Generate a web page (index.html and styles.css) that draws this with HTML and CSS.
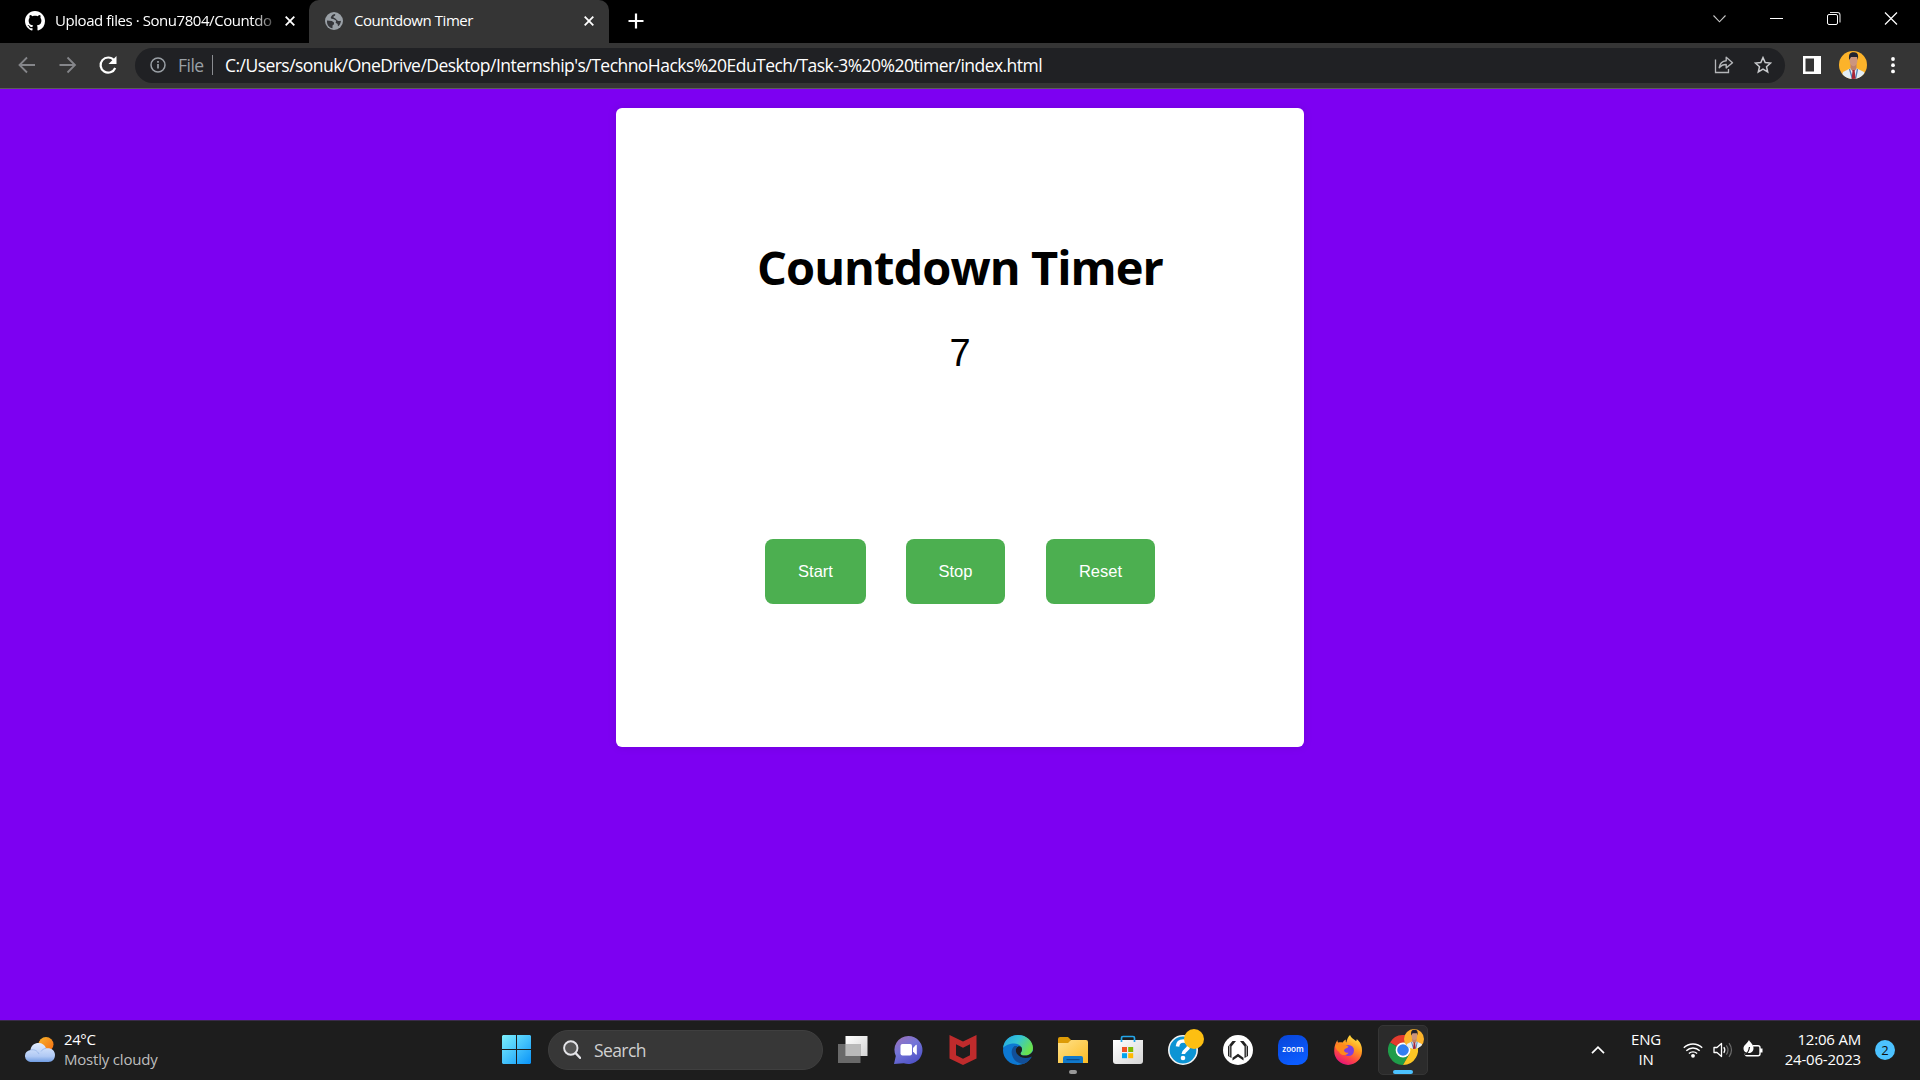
FILE: index.html
```html
<!DOCTYPE html>
<html lang="en">
<head>
<meta charset="utf-8">
<title>Countdown Timer</title>
<link rel="stylesheet" href="styles.css">
</head>
<body>
<svg class="defs" width="0" height="0">
  <defs>
    <linearGradient id="win" x1="0" y1="0" x2="1" y2="1"><stop offset="0" stop-color="#7cf0fd"/><stop offset=".5" stop-color="#45c3fb"/><stop offset="1" stop-color="#0993f8"/></linearGradient>
    <linearGradient id="cloud" x1="0" y1="0" x2="0" y2="1"><stop offset="0" stop-color="#e2edff"/><stop offset=".7" stop-color="#b0c9f4"/><stop offset="1" stop-color="#6f9ce2"/></linearGradient>
    <linearGradient id="sun" x1="0" y1="0" x2="1" y2="1"><stop offset="0" stop-color="#f8b52b"/><stop offset="1" stop-color="#f46a10"/></linearGradient>
    <linearGradient id="chat" x1="0" y1="0" x2=".6" y2="1"><stop offset="0" stop-color="#a070b5"/><stop offset=".5" stop-color="#7475d8"/><stop offset="1" stop-color="#5154c8"/></linearGradient>
    <linearGradient id="edgeTop" x1="0" y1="0" x2="1" y2=".5"><stop offset="0" stop-color="#22a4e4"/><stop offset=".5" stop-color="#35c5d4"/><stop offset="1" stop-color="#6ae24c"/></linearGradient>
    <linearGradient id="folder" x1="0" y1="0" x2="1" y2="1"><stop offset="0" stop-color="#ffe18a"/><stop offset="1" stop-color="#fcbc24"/></linearGradient>
    <linearGradient id="zoomBg" x1="0" y1="0" x2=".4" y2="1"><stop offset="0" stop-color="#0845d8"/><stop offset="1" stop-color="#0b5cff"/></linearGradient>
    <linearGradient id="fox" x1=".8" y1="0" x2=".3" y2="1"><stop offset="0" stop-color="#fff04a"/><stop offset=".4" stop-color="#ff9a1f"/><stop offset=".7" stop-color="#ff4a42"/><stop offset="1" stop-color="#e4107c"/></linearGradient>
    <linearGradient id="paper" x1="0" y1="0" x2="1" y2="1"><stop offset="0" stop-color="#fff"/><stop offset="1" stop-color="#d5d5d5"/></linearGradient>
    <clipPath id="round"><circle cx="14" cy="14" r="14"/></clipPath>
    <symbol id="portrait" viewBox="0 0 28 28">
      <g clip-path="url(#round)">
        <path d="M0 0h28v28H0z" fill="#fcb32a"/>
        <path d="M2 28l2-7 8-4h5l8 4 3 7z" fill="#e3edf5"/>
        <path d="M11.500 13h6v5l-3 3-3-3z" fill="#bb816c"/>
        <ellipse cx="14.500" cy="9.500" rx="3.900" ry="5.800" fill="#cb957f"/>
        <path d="M10.200 9C9.300 3 11 1 15 1.200c4 0 4.600 3 3.900 7.800L18 6h-6z" fill="#202331"/>
        <path d="M10.500 18l3 10M18.500 18L16.500 28" stroke="#4f82b8" stroke-width="1.300"/>
        <path d="M13.600 19h2l1 9h-4z" fill="#a72537"/>
      </g>
    </symbol>
  </defs>
</svg>
<div class="desktop">
  <header class="tabstrip">
    <div class="tab">
      <svg class="favicon" width="20" height="20" viewBox="0 0 16 16"><path fill="#fff" d="M8 0C3.580 0 0 3.580 0 8c0 3.540 2.290 6.530 5.470 7.590.4.070.55-.17.55-.38 0-.19-.01-.82-.01-1.490-2.010.37-2.530-.49-2.690-.94-.09-.23-.48-.94-.82-1.130-.28-.15-.68-.52-.01-.53.630-.01 1.080.58 1.230.82.720 1.210 1.870.87 2.330.66.070-.52.28-.87.510-1.070-1.780-.2-3.640-.89-3.640-3.950 0-.87.310-1.590.82-2.150-.08-.2-.36-1.020.08-2.120 0 0 .67-.21 2.200.82.640-.18 1.320-.27 2-.27s1.360.09 2 .27c1.530-1.040 2.200-.82 2.200-.82.440 1.100.16 1.920.08 2.120.510.560.82 1.270.82 2.150 0 3.070-1.870 3.750-3.650 3.950.290.250.540.730.540 1.480 0 1.070-.01 1.930-.01 2.200 0 .210.150.460.550.380A8.010 8.010 0 0 0 16 8c0-4.420-3.580-8-8-8z"/></svg>
      <span class="tab-title fade">Upload files · Sonu7804/Countdo</span>
      <svg width="10" height="10" viewBox="0 0 10 10"><path d="M.7.7l8.600 8.600M9.300.7L.7 9.300" stroke="#fff" stroke-width="1.800"/></svg>
    </div>
    <div class="tab active">
      <svg class="favicon" width="18" height="18" viewBox="0 0 18 18"><circle cx="9" cy="9" r="9" fill="#9aa0a6"/><path d="M2 8.500l4.800.6 2.200 1.300v1.800l-1.500 1.300v2.800C4 15.600 2 13 2 9.800zM10 2c.6.900.2 1.700-.8 2-1.300.4-.8 1.800.3 2.100 1.300.5 1.700 1.600 2.900 2.400 1.100.7 2.600.6 3.600.2-.2 2.700-1.600 4.600-3 5.500l-.4-2.200-2-1.300.6-2-2.300-1.500-2.900-.8C5.300 4.800 7.500 2.300 10 2z" fill="#35363a"/></svg>
      <span class="tab-title">Countdown Timer</span>
      <svg width="10" height="10" viewBox="0 0 10 10"><path d="M.7.7l8.600 8.600M9.300.7L.7 9.300" stroke="#fff" stroke-width="1.800"/></svg>
    </div>
    <svg class="newtab" width="16" height="16" viewBox="0 0 16 16"><path d="M8 .5v15M.5 8h15" stroke="#fff" stroke-width="2.200"/></svg>
    <div class="window-controls">
      <svg width="57" height="38" viewBox="0 0 57 38"><path d="M22.500 15.500l6 6.300 6-6.300" fill="none" stroke="#c8c8c8" stroke-width="1.100"/></svg>
      <svg width="57" height="38" viewBox="0 0 57 38"><path d="M22 18.500h13" stroke="#fff"/></svg>
      <svg width="57" height="38" viewBox="0 0 57 38"><rect x="22.500" y="14.500" width="10" height="10" rx="1.500" fill="none" stroke="#fff"/><path d="M25 12.500h7.500q2.500 0 2.500 2.500v7.500" fill="none" stroke="#ddd" stroke-width="1.100"/></svg>
      <svg width="57" height="38" viewBox="0 0 57 38"><path d="M23 12.500l12 12M35 12.500l-12 12" stroke="#fff" stroke-width="1.200"/></svg>
    </div>
  </header>

  <nav class="toolbar">
    <svg width="40" height="24" viewBox="0 0 40 24"><path d="M35 12H20.500M27 4.500L19.500 12l7.500 7.500" fill="none" stroke="#85868a" stroke-width="1.800"/></svg>
    <svg width="40" height="24" viewBox="0 0 40 24"><path d="M19.500 12h15M27.500 4.500L35 12l-7.500 7.500" fill="none" stroke="#85868a" stroke-width="1.800"/></svg>
    <svg width="40" height="24" viewBox="0 0 40 24"><path d="M34 7.200A7.600 7.600 0 1 0 35.200 15" fill="none" stroke="#fff" stroke-width="2.200"/><path d="M36.500 3v8h-8z" fill="#fff"/></svg>
    <div class="omnibox">
      <svg width="16" height="16" viewBox="0 0 16 16"><circle cx="8" cy="8" r="7" fill="none" stroke="#9aa0a6" stroke-width="1.500"/><path d="M8 7v4.500M8 4v1.700" stroke="#9aa0a6" stroke-width="1.700"/></svg>
      <span class="scheme">File</span>
      <span class="divider"></span>
      <span class="url">C:/Users/sonuk/OneDrive/Desktop/Internship's/TechnoHacks%20EduTech/Task-3%20%20timer/index.html</span>
      <svg class="share" width="20" height="18" viewBox="0 0 20 18"><path d="M1.500 3.500v13h13v-3.500" fill="none" stroke="#b4b6b9" stroke-width="1.300"/><path d="M5.200 11.700c.6-4.300 3-6.600 7-6.900V1.300l6.300 5.400-6.300 5.200V8.500c-3 0-5.200 1-7 3.200z" fill="none" stroke="#b4b6b9" stroke-width="1.400" stroke-linejoin="round"/></svg>
      <svg width="18" height="18" viewBox="0 0 18 18"><path d="M9 1.600l2.200 5 5.400.5-4.100 3.600 1.200 5.300L9 13.200 4.300 16l1.200-5.300L1.400 7.100l5.400-.5z" fill="none" stroke="#c8cacd" stroke-width="1.500"/></svg>
    </div>
    <svg class="sidepanel" width="18" height="18" viewBox="0 0 18 18"><path fill="#fff" fill-rule="evenodd" d="M0 0h18v18H0zM2.500 2.500v13H11v-13z"/></svg>
    <svg class="avatar" width="28" height="28"><use href="#portrait"/></svg>
    <svg class="menu" width="4" height="18" viewBox="0 0 4 18"><circle cx="2" cy="3" r="1.900" fill="#fff"/><circle cx="2" cy="9.200" r="1.900" fill="#fff"/><circle cx="2" cy="15.400" r="1.900" fill="#fff"/></svg>
  </nav>

  <main class="page">
    <section class="card">
      <h1>Countdown Timer</h1>
      <div class="count">7</div>
      <div class="buttons">
        <button class="start">Start</button>
        <button class="stop">Stop</button>
        <button class="reset">Reset</button>
      </div>
    </section>
  </main>

  <footer class="taskbar">
    <div class="weather">
      <svg width="30" height="25" viewBox="0 0 30 25"><circle cx="21" cy="7.500" r="7.500" fill="url(#sun)"/><path d="M6.500 25a6 6 0 0 1-1-12C6 8.500 9.500 6 13.500 6c3.700 0 6.500 2 7.500 5.300 5-.8 9 2 9 6.500 0 4.200-2.500 7.200-6.500 7.200z" fill="url(#cloud)"/><path d="M5.500 13c4-1 7 1 8.500 4M21 11.300c-2.500.5-4 1.500-5 3.200" fill="none" stroke="#93b2e6" stroke-width=".8"/></svg>
      <div class="weather-text"><span class="temp">24°C</span><span class="sky">Mostly cloudy</span></div>
    </div>
    <div class="dock">
      <svg class="windows" width="29" height="29" viewBox="0 0 29 29"><path fill="url(#win)" d="M1 0h13v14H0V1zM15 0h13l1 1v13H15zM0 15h14v14H1l-1-1zM15 15h14v13l-1 1H15z"/></svg>
      <div class="search">
        <svg width="18" height="19" viewBox="0 0 18 19"><path d="M12.500 13l4.500 4.800" stroke="#e4e4e8" stroke-width="2.400" stroke-linecap="round"/><circle cx="7.800" cy="8" r="6.700" fill="#555" stroke="#e4e4e8" stroke-width="1.900"/></svg>
        <span>Search</span>
      </div>
      <div class="apps">
        <div class="app"><svg width="30" height="30" viewBox="0 0 30 30"><path d="M7.500 1h22v20h-22z" fill="url(#paper)"/><path d="M0 9h22.500v19H0z" fill="#777" opacity=".85"/><path d="M7.500 9h15v12h-15z" fill="#b9b9b9"/></svg></div>
        <div class="app"><svg width="30" height="30" viewBox="0 0 30 30"><path d="M15.300 1a14 14 0 1 1-4.500 27.200L1 29l1.800-8A14 14 0 0 1 15.300 1z" fill="url(#chat)"/><rect x="7.500" y="9" width="11.500" height="11.500" rx="2" fill="#fff"/><path d="M20 13l3-3.200q.8-.3.800.7v8.500q0 1-.8.700L20 16.500z" fill="#fff"/></svg></div>
        <div class="app"><svg width="30" height="30" viewBox="0 0 30 30"><path d="M1.500 0L15 6.500 28.500 0v23.500L15 30 1.500 23.500zM8 9.300v11L15 23.800l7-3.500v-11l-7 3.500z" fill="#bf2b2c"/></svg></div>
        <div class="app"><svg width="30" height="30" viewBox="0 0 30 30"><circle cx="15" cy="15" r="15" fill="#0d78d2"/><path d="M0 13C1 5 7 0 15 0c9 0 15 6.500 15 13 0 5-3.800 7.500-8.200 7.500-3 0-4.300-1.100-4.300-2.100 0-1 1.500-1.400 1.500-4 0-3.400-3.300-5.800-7.500-5.800C6.500 8.600 2 10.500 0 13z" fill="url(#edgeTop)"/><path d="M11.500 11c-3 2.300-3.800 6.800-1.700 11 2 4.200 6.200 6.800 10.700 7 3.300-1.200 6.500-4 8-6.800.3-.7-.2-.9-.8-.6-8 3.300-14.500-.5-14.800-5.300-.1-2.500 1-4.300 1.500-5.200z" fill="#124f98"/><path d="M17.500 18.400c0 1 1.300 2.100 4.300 2.100 2.700 0 5-.9 6.600-2.600L30 16v5.500l-1.700.3c-6 2.500-12.500.8-14.700-3.300-1.600-3-.5-6 1.500-7 2.300-.8 4 .8 3.900 2.900 0 2.600-1.500 3-1.500 4z" fill="#1d1d1d"/></svg></div>
        <div class="app running"><svg width="30" height="30" viewBox="0 0 30 30"><path d="M0 4q0-2 2-2h8l3 3-2 4H0z" fill="#dd9b06"/><path d="M0 8h10l3-3h15q2 0 2 2v21H0z" fill="url(#folder)"/><path d="M5 28v-5q0-2 2-2h16q2 0 2 2v5z" fill="#1179cb"/><path d="M9 24.700h12" stroke="#0a4c8d" stroke-width="1.300" stroke-linecap="round"/></svg></div>
        <div class="app"><svg width="30" height="30" viewBox="0 0 30 30"><path d="M8.500 6V3q0-1.500 1.500-1.500h10q1.500 0 1.500 1.500v3" fill="none" stroke="#24a7ea" stroke-width="1.700"/><path d="M0 5h30v21q0 3-3 3H3q-3 0-3-3z" fill="url(#paper)"/><path d="M9 12h5v5H9z" fill="#f05023"/><path d="M15.200 12h5v5h-5z" fill="#7fba00"/><path d="M9 18.200h5v5H9z" fill="#00a4ef"/><path d="M15.200 18.200h5v5h-5z" fill="#ffb901"/><path d="M8.500 5v2M21.500 5v2" stroke="#24a7ea" stroke-width="1.700"/></svg></div>
        <div class="app"><svg width="30" height="30" viewBox="0 0 30 30"><circle cx="15" cy="15" r="14.200" fill="#0c94d4" stroke="#f4f4f4" stroke-width="1.600"/><path d="M9.500 11.500c.3-4 2.600-5.500 5.700-5.500 3.300 0 5.600 2 5.600 4.800 0 4-5.500 4.300-5.500 8.200" fill="none" stroke="#fff" stroke-width="3.600"/><circle cx="15" cy="23" r="2.300" fill="#fff"/></svg><span class="alert"></span></div>
        <div class="app"><svg width="30" height="30" viewBox="0 0 30 30"><circle cx="15" cy="15" r="15" fill="#fff"/><path d="M5 21v-9.500L9.500 6H13L8.500 11.500V23L5 21zM25 21v-9.500L20.500 6H17l4.500 5.500V23l3.500-2z" fill="#222"/><path d="M6.700 10.500v11M23.300 10.500v11" stroke="#fff" stroke-width=".7"/><path d="M10 25.500V12l3.500-4.500h3L20 12v13.500l-5-4z" fill="#fff"/><path d="M9.500 25.500v-2.700l5.500-4 5.500 4v2.700l-5.500-3.800z" fill="#222"/></svg></div>
        <div class="app"><svg width="30" height="30" viewBox="0 0 30 30"><rect width="30" height="30" rx="10" fill="url(#zoomBg)"/><text x="4.300" y="16.800" textLength="21.500" lengthAdjust="spacingAndGlyphs" class="zoom-word">zoom</text></svg></div>
        <div class="app"><svg width="30" height="30" viewBox="0 0 30 30"><path d="M17 0c1 3 4 4 6 6 .8-.5.8-1 .6-2C27 6.500 29.300 11 29 16a13.900 13.900 0 0 1-27.800 0c0-5 1.300-8 3.300-11 0 1.500.2 2 .8 2.600 1.400-.5 3-.4 4.400 0C10.500 6 11.500 5 13 4.500c-.5 1.300-.2 2.200.3 3C14 4 15 2 17 0z" fill="url(#fox)"/><circle cx="15.500" cy="15.500" r="5.500" fill="#7c3fe0"/><path d="M2 11c2-2 5-2.500 7.500-1.500 1.800.7 4 .7 6 2-.5 1.600-2.600 1.800-3.800 2.700-1.700 1.600.3 3.800 3.800 3.500-2 3.500-8 3-9.500-1-1.500-.5-3-3-4-5.700z" fill="#ff8a1c"/></svg></div>
        <div class="app current"><svg width="30" height="30" viewBox="0 0 30 30"><path d="M15 15L2 7.500A15 15 0 0 1 28 7.500H15z" fill="#e33b2e"/><path d="M15 15l6.500 3.700L15 30A15 15 0 0 1 2 7.500z" fill="#1f9d49"/><path d="M15 7.500h13A15 15 0 0 1 15 30l6.500-11.300z" fill="#fcc624"/><circle cx="15" cy="15" r="7.400" fill="#fff"/><circle cx="15" cy="15" r="5.800" fill="#317ef0"/></svg><svg class="mini-avatar" width="20" height="20"><use href="#portrait"/></svg></div>
      </div>
    </div>
    <div class="tray">
      <svg width="14" height="8" viewBox="0 0 14 8"><path d="M1 7.200L7 1.200l6 6" fill="none" stroke="#fff" stroke-width="1.700"/></svg>
      <div class="lang"><span>ENG</span><span>IN</span></div>
      <div class="status">
        <svg width="20" height="20" viewBox="0 0 20 20"><path d="M.8 7.800a13.200 13.200 0 0 1 18.400 0M3.300 10.700a9.500 9.500 0 0 1 13.400 0M5.900 13.500a5.900 5.900 0 0 1 8.200 0" fill="none" stroke="#fff" stroke-width="1.400"/><circle cx="10" cy="15.800" r="1.900" fill="#fff"/></svg>
        <svg width="20" height="20" viewBox="0 0 20 20"><path d="M1 7.500h3l4.500-4v13l-4.500-4H1z" fill="none" stroke="#fff" stroke-width="1.300" stroke-linejoin="round"/><path d="M10.800 7.200q2 2.800 0 5.600" fill="none" stroke="#fff" stroke-width="1.300"/><path d="M13.300 5.300q3.400 4.700 0 9.400M16 3.200q5 6.800 0 13.600" fill="none" stroke="#6b6b6b" stroke-width="1.200"/></svg>
        <svg width="20" height="20" viewBox="0 0 20 20"><path d="M10 5.700h5q2 0 2 2v6q0 2-2 2H4q-2 0-2-2" fill="none" stroke="#fff" stroke-width="1.400"/><path d="M17 8.500h2.500v4H17z" fill="#fff"/><path d="M6 0c.5 2 4.500 4 4.500 8 0 3.500-2 5-4.500 5-3 0-5.500-1.500-5.500-4.500C.5 5 4 4 6 0z" fill="#fff"/><path d="M1 15.500C4 14 6 11 6.500 7" fill="none" stroke="#1d1d1d" stroke-width="1.200"/></svg>
      </div>
      <div class="clock"><span class="time">12:06 AM</span><span class="date">24-06-2023</span></div>
      <span class="badge">2</span>
    </div>
  </footer>
</div>
</body>
</html>
```

FILE: styles.css
```css
* { box-sizing: border-box; }
body { margin: 0; font-family: "Open Sans", "Noto Sans", sans-serif; overflow: hidden; }
.defs { display: block; height: 0; position: absolute; }
svg { display: block; flex: none; }
.desktop { width: 1920px; height: 1080px; display: flex; flex-direction: column; background: #7d00f2; }

/* Tab strip */
.tabstrip { height: 43px; background: #000; display: flex; flex: none; }
.tab { width: 309px; height: 43px; padding: 0 14px 1px 25px; display: flex; align-items: center; color: #fff; font-size: 15px; letter-spacing: -.44px; }
.tab.active { width: 300px; padding: 0 15px 1px 16px; background: #353535; border-radius: 10px 10px 0 0; }
.tab-title { flex: 1; white-space: nowrap; margin: 0 10px; padding-bottom: 2px; }
.tab.active .tab-title { margin-left: 11px; }
.fade { -webkit-mask-image: linear-gradient(90deg, #000 90%, rgba(0, 0, 0, .2)); mask-image: linear-gradient(90deg, #000 90%, rgba(0, 0, 0, .2)); }
.newtab { margin: 13px 0 0 19px; }
.window-controls { display: flex; margin-left: auto; padding-right: 1px; }

/* Toolbar */
.toolbar { height: 46px; background: #353535; border-bottom: 1px solid #5c5c5c; display: flex; align-items: center; flex: none; padding-bottom: 1px; }
.omnibox { width: 1650px; height: 35px; margin-left: 15px; border-radius: 18px; background: #202124; display: flex; align-items: center; padding: 0 13px 0 15px; font-size: 17.5px; color: #fff; white-space: nowrap; }
.scheme { margin-left: 12px; width: 34px; color: #9aa0a6; letter-spacing: -.5px; }
.divider { width: 1px; height: 20px; background: #8b8d91; }
.url { margin-left: 12px; letter-spacing: -.54px; }
.share { margin-left: auto; margin-right: 20px; }
.sidepanel { margin-left: 18px; }
.avatar { margin-left: 18px; }
.menu { margin-left: 24px; }

/* Countdown page */
.page { flex: 1; padding-top: 19px; }
.card { width: 688px; height: 639px; margin: 0 auto; background: #fff; border-radius: 6px; box-shadow: 0 0 10px rgba(0, 0, 0, .1); display: flex; flex-direction: column; align-items: center; color: #000; }
h1 { margin: 127px 0 0; font-size: 47px; line-height: 65px; letter-spacing: -.95px; white-space: nowrap; }
.count { margin-top: 31px; font: 38px/44px "Liberation Sans", Arial, sans-serif; }
.buttons { display: flex; gap: 40px; margin-top: 164px; }
button { height: 65px; border: 0; border-radius: 8px; padding: 0; background: #4caf50; color: #fff; font: 16.5px "Liberation Sans", Arial, sans-serif; }
.start { width: 101px; }
.stop { width: 99px; }
.reset { width: 109px; margin-left: 1px; }

/* Taskbar */
.taskbar { height: 60px; flex: none; background: #1d1d1d; border-top: 1px solid #3a2a4a; display: flex; align-items: center; padding-bottom: 2px; color: #fff; font-size: 15px; }
.weather { width: 502px; padding-left: 25px; display: flex; align-items: center; gap: 9px; }
.weather-text, .lang, .clock { display: flex; flex-direction: column; line-height: 20px; white-space: nowrap; padding-bottom: 2px; letter-spacing: -.2px; }
.temp { letter-spacing: -.4px; }
.sky { color: #bdbdbd; }
.dock { display: flex; align-items: center; }
.search { width: 275px; height: 40px; margin-left: 17px; border-radius: 20px; background: #373737; border: 1px solid #3f3f3f; display: flex; align-items: center; gap: 13px; padding-left: 14px; font-size: 17.5px; letter-spacing: -.6px; color: #d0d0d0; }
.apps { display: flex; gap: 5px; margin-left: 5px; }
.app { width: 50px; height: 50px; position: relative; display: flex; align-items: center; justify-content: center; }
.app.running::after, .app.current::after { content: ""; position: absolute; bottom: 1px; width: 8px; height: 4px; border-radius: 2px; background: #999; }
.app.current { background: #2b2b2b; border: 1px solid #353535; border-radius: 5px; }
.app.current::after { width: 20px; bottom: 0; background: #4cc2ff; }
.alert { position: absolute; right: 4px; top: 4px; width: 20px; height: 20px; border-radius: 50%; background: #fdbf12; }
.mini-avatar { position: absolute; right: 3px; top: 3px; }
.zoom-word { font: 600 8px "Open Sans", sans-serif; fill: #fff; }
.tray { display: flex; align-items: center; margin-left: auto; padding-right: 25px; }
.lang { width: 40px; margin-left: 21px; text-align: center; }
.status { display: flex; gap: 10px; margin-left: 17px; }
.clock { width: 90px; margin-left: 8px; text-align: right; }
.badge { width: 20px; height: 20px; margin-left: 14px; border-radius: 50%; background: #4cc2ff; color: #111; font-size: 13px; line-height: 20px; text-align: center; }
```
